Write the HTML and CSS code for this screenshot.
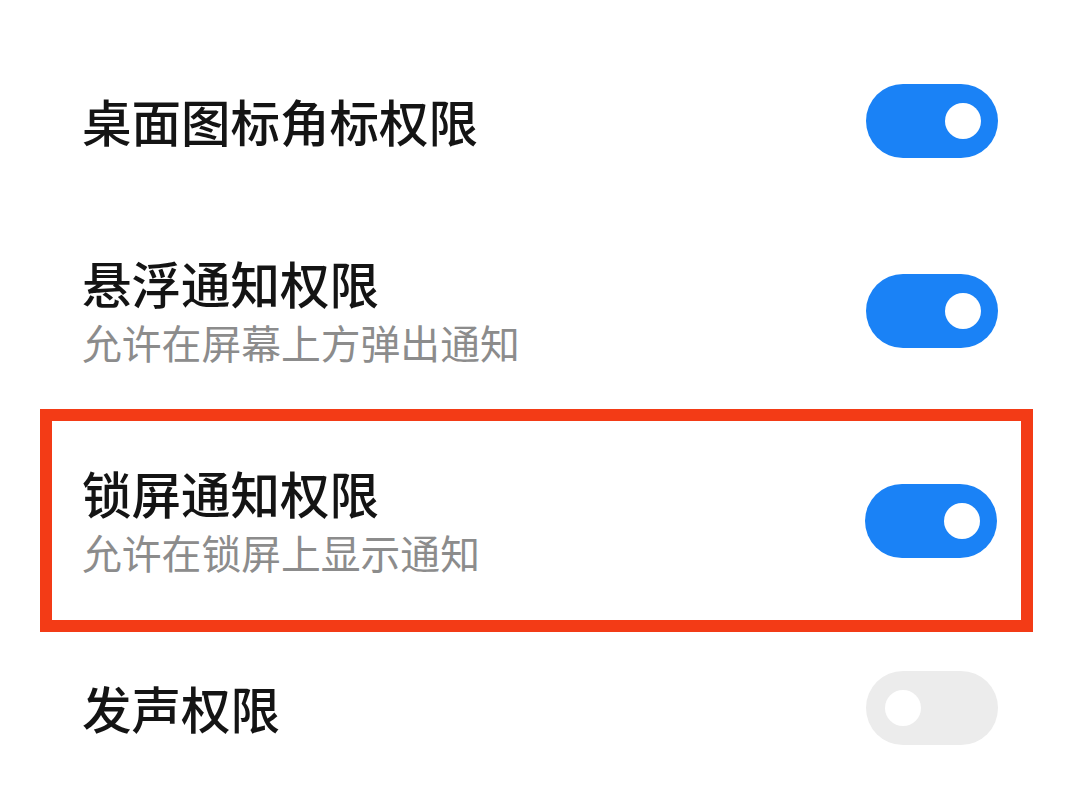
FILE: index.html
```html
<!DOCTYPE html>
<html lang="zh-CN">
<head>
  <meta charset="UTF-8">
  <title>通知权限</title>
  <link rel="stylesheet" href="styles.css">
</head>
<body>

<div class="list">
  <!-- 桌面图标角标 -->
  <div class="row row-first">
    <div class="text">
      <p class="title">桌面图标角标权限</p>
    </div>
    <span class="switch on"><span class="knob"></span></span>
  </div>

  <!-- 悬浮通知 -->
  <div class="row row-float">
    <div class="text">
      <p class="title">悬浮通知权限</p>
      <p class="sub">允许在屏幕上方弹出通知</p>
    </div>
    <span class="switch on"><span class="knob"></span></span>
  </div>

  <!-- 锁屏通知（红框标出） -->
  <div class="row row-lock highlight">
    <div class="text">
      <p class="title">锁屏通知权限</p>
      <p class="sub">允许在锁屏上显示通知</p>
    </div>
    <span class="switch on"><span class="knob"></span></span>
  </div>

  <!-- 发声 -->
  <div class="row row-sound">
    <div class="text">
      <p class="title">发声权限</p>
    </div>
    <span class="switch off"><span class="knob"></span></span>
  </div>
</div>

</body>
</html>
```

FILE: styles.css
```css
body {
  margin: 0;
  background: #ffffff;
  font-family: "Noto Sans CJK SC", "Noto Sans", sans-serif;
  overflow: hidden;
}

.list {
  padding-top: 30px;
}

.row {
  display: flex;
  align-items: center;
  justify-content: space-between;
  padding: 0 82px;
  box-sizing: border-box;
}

.row-first { height: 182px; }
.row-float { height: 197px; }
.row-sound { height: 152px; }

.highlight {
  height: 223px;
  margin: 0 47px 0 40px;
  padding: 0 24px 0 30px;
  border: 12px solid #f33b16;
}

.text p {
  margin: 0;
}

.title {
  font-size: 49.5px;
  line-height: 56px;
  font-weight: 500;
  color: #141414;
}

.sub {
  margin-top: 7px !important;
  font-size: 39.8px;
  line-height: 48px;
  color: #8c8c8c;
}

.switch {
  display: flex;
  align-items: center;
  width: 132px;
  height: 74px;
  border-radius: 37px;
  box-sizing: border-box;
  padding: 0 17px;
  flex-shrink: 0;
}

.switch.on {
  background: #1a82f6;
  justify-content: flex-end;
}

.switch.off {
  background: #ececec;
  justify-content: flex-start;
  padding: 0 19px;
}

.knob {
  width: 36px;
  height: 36px;
  border-radius: 50%;
  background: #ffffff;
}
```
